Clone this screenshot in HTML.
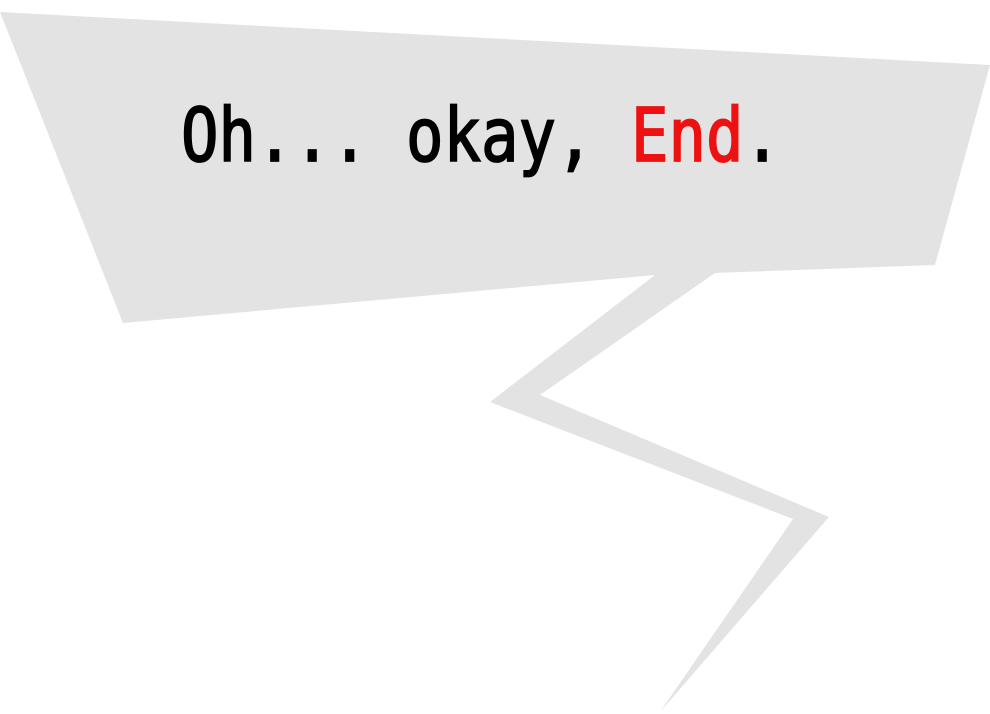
<!DOCTYPE html>
<html><head><meta charset="utf-8"><style>html,body{margin:0;padding:0;background:#fff;width:990px;height:714px;overflow:hidden}</style></head>
<body>
<svg width="990" height="714" viewBox="0 0 990 714" xmlns="http://www.w3.org/2000/svg">
<polygon fill="#e3e3e3" points="0,12 990,65 935,265 715,273 540,395 829,517 660,712 793,519 490,402 655,275 123,323"/>
<text x="181" y="161" font-family="DejaVu Sans Mono, Liberation Mono, monospace" font-size="74" textLength="600" lengthAdjust="spacingAndGlyphs" fill="#000" stroke="#000" stroke-width="1.8">Oh... okay, <tspan fill="#ee1111" stroke="#ee1111">End</tspan>.</text>
</svg>
</body></html>
